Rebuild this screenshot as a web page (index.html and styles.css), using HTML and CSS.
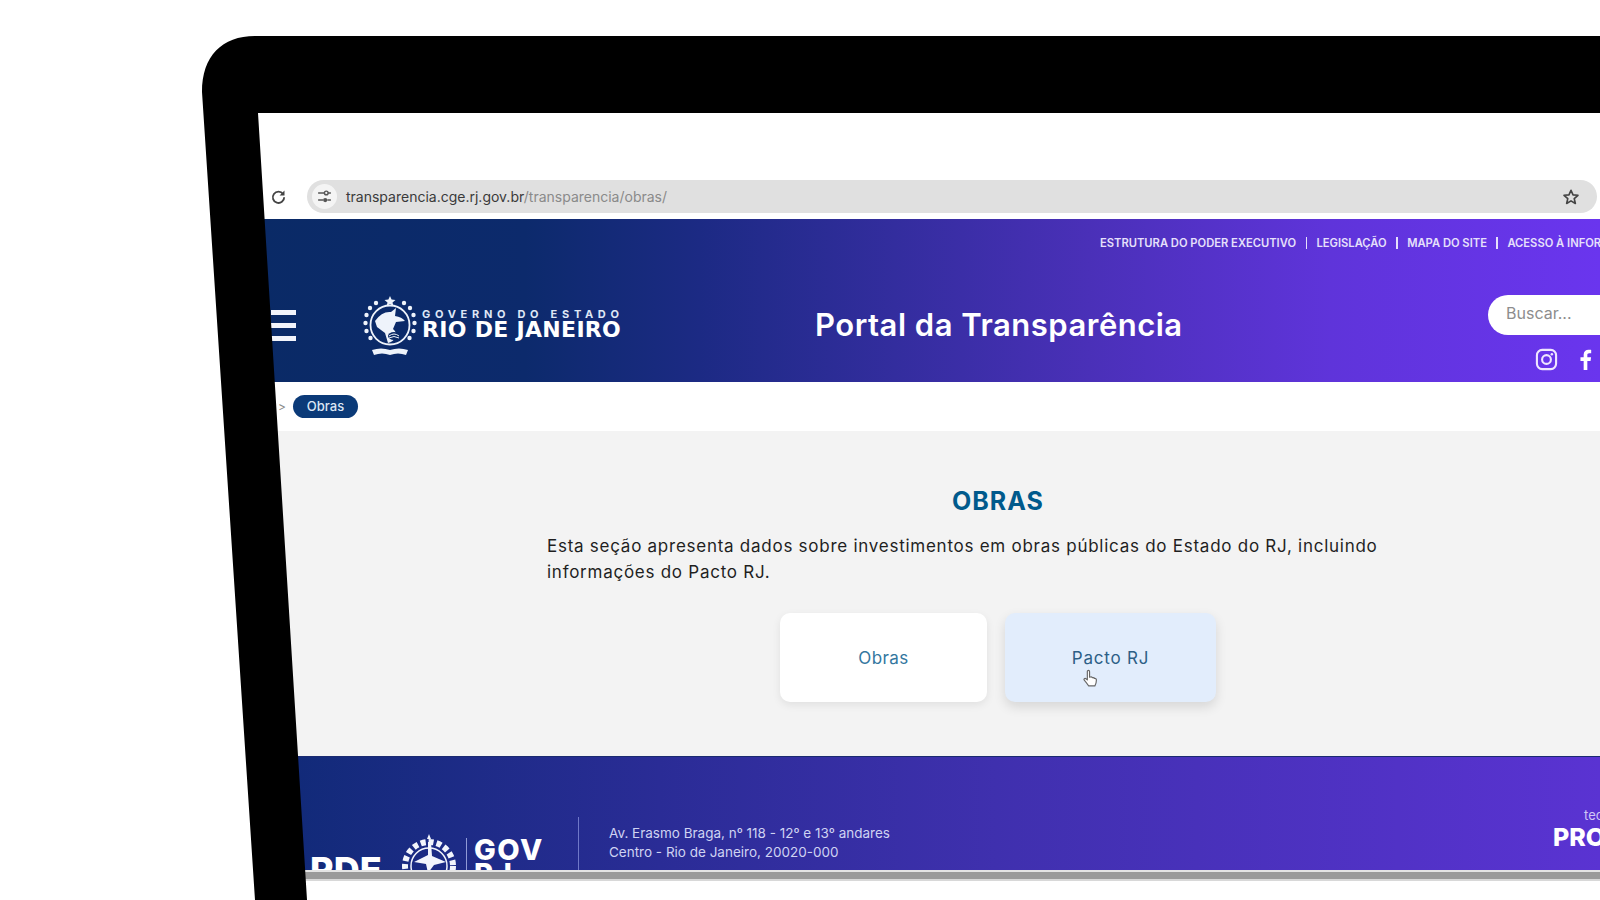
FILE: index.html
```html
<!DOCTYPE html>
<html lang="pt-BR">
<head>
<meta charset="utf-8">
<title>Portal da Transparência</title>
<link rel="stylesheet" href="styles.css">
</head>
<body>
<div class="stage">
  <div class="screen">
    <div class="chrome">
      <svg class="reload" viewBox="0 0 24 24" width="17" height="17"><path d="M18.5 8.5A8 8 0 1 0 20 13" fill="none" stroke="#444" stroke-width="2.6"/><path d="M20.5 3.5v7h-7z" fill="#444"/></svg>
      <div class="urlbar">
        <span class="tune"><svg viewBox="0 0 24 24" width="17" height="17"><path d="M3 7h9M3 17h7M17 7h4M16 17h5" stroke="#555" stroke-width="2" fill="none"/><circle cx="14.5" cy="7" r="2.6" fill="none" stroke="#555" stroke-width="2"/><circle cx="13" cy="17" r="3" fill="#555"/></svg></span>
        <span class="url"><b>transparencia.cge.rj.gov.br</b>/transparencia/obras/</span>
        <svg class="star" viewBox="0 0 24 24" width="18" height="18"><path d="M12 3l2.7 6.1 6.6.6-5 4.4 1.5 6.5L12 17.2l-5.8 3.4 1.5-6.5-5-4.4 6.6-.6z" fill="none" stroke="#444" stroke-width="2.2" stroke-linejoin="round"/></svg>
      </div>
    </div>

    <header class="site-header">
      <nav class="top-links">
        <a>ESTRUTURA DO PODER EXECUTIVO</a><i></i><a>LEGISLAÇÃO</a><i></i><a>MAPA DO SITE</a><i></i><a>ACESSO À INFORMAÇÃO</a>
      </nav>
      <div class="main-row">
        <div class="burger"><span></span><span></span><span></span></div>
        <div class="logo">
          <svg class="emblem" viewBox="0 0 54 60" width="54" height="60">
            <g fill="#eef3fb">
              <path d="M27 0l1.6 3.6 3.9.3-3 2.5 1 3.8L27 8.1l-3.5 2.1 1-3.8-3-2.5 3.9-.3z"/>
              <circle cx="13" cy="7" r="2.2"/><circle cx="41" cy="7" r="2.2"/>
              <circle cx="7" cy="12" r="2.2"/><circle cx="47" cy="12" r="2.2"/>
              <circle cx="3.5" cy="19" r="2.2"/><circle cx="50.500" cy="19" r="2.2"/>
              <circle cx="2.500" cy="27" r="2.2"/><circle cx="51.500" cy="27" r="2.2"/>
              <circle cx="3.500" cy="35" r="2.2"/><circle cx="50.500" cy="35" r="2.2"/>
              <circle cx="7.500" cy="42" r="2.2"/><circle cx="46.500" cy="42" r="2.2"/>
              <path d="M9 54q9-3 18 0q9-3 18 0l-2 5q-8-3-16 0q-8-3-16 0z"/>
              <path d="M12 25q7-10 16-9l5-4-1 8q7 1 10 5l-9 1-3 7q4 3 3 8-3 5-8 6l-3-10-8-6z"/>
            </g>
            <circle cx="27" cy="29" r="19.500" fill="none" stroke="#eef3fb" stroke-width="1.800"/>
            <ellipse cx="31" cy="40" rx="6" ry="4" fill="#0b2a66"/>
            <path d="M26 40q5-4 10 0M26 42q5-3 10 0" stroke="#eef3fb" fill="none" stroke-width="1"/>
          </svg>
          <div class="logo-text">
            <span class="gov-line">GOVERNO DO ESTADO</span>
            <span class="rio-line">RIO DE JANEIRO</span>
          </div>
        </div>
        <h1 class="site-title">Portal da Transparência</h1>
        <div class="tools">
          <div class="search">Buscar...</div>
          <div class="socials">
            <svg viewBox="0 0 24 24" width="23" height="23"><rect x="2" y="2" width="20" height="20" rx="5.500" fill="none" stroke="#efe6ff" stroke-width="2.2"/><circle cx="12" cy="12" r="4.600" fill="none" stroke="#efe6ff" stroke-width="2.2"/><circle cx="17.600" cy="6.400" r="1.300" fill="#efe6ff"/></svg>
            <svg viewBox="0 0 14 24" width="13" height="22"><path d="M9 23V13h3.500l.6-4H9V6.500C9 5.300 9.500 4.500 11 4.500h2.200V1C12.700.9 11.500.800 10.300.800 7.300.800 5 2.700 5 6v3H1.500v4H5v10z" fill="#fff"/></svg>
          </div>
        </div>
      </div>
    </header>

    <div class="crumbs">
      <span class="sep">&gt;</span>
      <span class="pill">Obras</span>
    </div>

    <main class="content">
      <h2 class="heading">OBRAS</h2>
      <p class="lead">Esta seção apresenta dados sobre investimentos em obras públicas do Estado do RJ, incluindo informações do Pacto RJ.</p>
      <div class="cards">
        <a class="card">Obras</a>
        <a class="card card-hover">Pacto RJ
          <svg class="hand" viewBox="0 0 18 22" width="16" height="20"><path d="M6 2.500c0-1.600 2.500-1.600 2.500 0V9l1-.3c1-.3 1.700 0 2 .8l.8-.1c1-.1 1.500.4 1.700 1 1.300-.2 2.200.5 2.200 1.800 0 3-.5 4.500-1.700 6.500H7.500c-1.500-2-3-4-5-6.300-1-1.300.7-2.800 2-1.700L6 12z" fill="#fff" stroke="#666" stroke-width="1.300" stroke-linejoin="round"/></svg>
        </a>
      </div>
    </main>

    <footer class="site-footer">
      <span class="foot-rde">RDE</span>
      <svg class="foot-emblem" viewBox="0 0 64 64" width="64" height="64">
        <g fill="#f2f5fc"><path d="M32 0l2 5h-4z"/><circle cx="32" cy="32" r="24" fill="none" stroke="#f2f5fc" stroke-width="6" stroke-dasharray="5 3"/><circle cx="32" cy="32" r="18" fill="none" stroke="#f2f5fc" stroke-width="1.500"/><path d="M31 8l3 0 1 14 14 6-12 3-6 8-2-9-12-2 14-7z"/></g>
      </svg>
      <div class="foot-gov"><span>GOV</span><span>RJ</span></div>
      <div class="foot-rule"></div>
      <address class="foot-address">Av. Erasmo Braga, nº 118 - 12º e 13º andares<br>Centro - Rio de Janeiro, 20020-000</address>
      <div class="foot-brand"><small>tecnologia</small><strong>PRODERJ</strong></div>
    </footer>
    <div class="screen-edge"></div>
  </div>

  <svg class="bezel" viewBox="0 0 1600 900" width="1600" height="900">
    <path d="M1600 36H255C222 36 202 56 202 92L255 900H307L258 113H1600Z" fill="#000"/>
  </svg>
</div>
</body>
</html>
```
FILE: styles.css
```css
* { box-sizing: border-box; }
html, body { margin: 0; padding: 0; background: #fff; }
body { font-family: Inter, "Liberation Sans", sans-serif; }
.stage { position: relative; width: 1600px; height: 900px; overflow: hidden; background: #fff; }
.screen { margin-left: 256px; padding-top: 113px; width: 1344px; }

.chrome { height: 106px; padding: 67px 0 6px 14px; display: flex; align-items: center; gap: 20px; background: #fff; }
.reload { flex: none; }
.urlbar { flex: none; width: 1290px; height: 33px; border-radius: 17px; background: #e0e0e0; display: flex; align-items: center; padding-left: 5px; }
.tune { width: 25px; height: 25px; border-radius: 50%; background: #f4f4f4; display: flex; align-items: center; justify-content: center; }
.url { margin-left: 9px; font-size: 14px; color: #8a8a8a; white-space: nowrap; }
.url b { font-weight: 400; color: #3a3a3a; }
.star { margin-left: auto; margin-right: 17px; }

.site-header { height: 163px; background: linear-gradient(90deg, #0a2a66 0%, #0c2a6c 20%, #1c2a84 33%, #4a30b8 62%, #5f34da 80%, #6a35ee 100%); color: #fff; overflow: hidden; }
.top-links { height: 50px; padding: 17px 0 0 844px; display: flex; align-items: flex-start; white-space: nowrap; font-size: 11.200px; font-weight: 600; line-height: 14px; color: #e6e0fb; }
.top-links i { flex: none; width: 1.500px; height: 12px; margin: 1px 9.500px 0; background: #e6e0fb; }
.main-row { height: 113px; display: flex; align-items: center; }
.burger { flex: none; margin-left: 15px; width: 25px; display: flex; flex-direction: column; gap: 8px; }
.burger span { height: 5px; background: #f2f4fb; }
.logo { flex: none; margin-left: 67px; width: 257px; display: flex; align-items: center; gap: 5px; }
.emblem { flex: none; }
.logo-text { flex: none; width: 198px; display: flex; flex-direction: column; margin-bottom: 4px; }
.gov-line { font-size: 11px; line-height: 12px; font-weight: 700; letter-spacing: 4.700px; color: #dfe7f6; white-space: nowrap; }
.rio-line { font-family: "DejaVu Sans", sans-serif; font-size: 22px; line-height: 20px; font-weight: 700; letter-spacing: 0.300px; white-space: nowrap; }
.site-title { flex: none; margin: 0 0 2px 195px; width: 367px; font-size: 31px; font-weight: 600; letter-spacing: 0.500px; white-space: nowrap; }
.tools { flex: none; margin-left: 306px; height: 113px; padding-top: 26px; }
.search { width: 200px; height: 40px; border-radius: 20px; background: #fff; color: #8d8d8d; font-size: 16px; line-height: 37px; padding-left: 18px; }
.socials { margin: 13px 0 0 47px; display: flex; align-items: center; gap: 21px; }
.socials svg { flex: none; }

.crumbs { height: 49px; background: #fff; display: flex; align-items: center; padding-left: 22px; }
.sep { color: #8a8a8a; font-size: 12px; width: 15px; }
.pill { width: 65px; height: 23px; border-radius: 12px; background: #0b3a78; color: #dce6f4; font-size: 13px; line-height: 23px; text-align: center; font-weight: 500; }

.content { height: 325px; background: #f3f3f3; padding-top: 56px; }
.heading { margin: 0; width: 1484px; text-align: center; font-size: 25px; line-height: 28px; font-weight: 700; color: #005a8c; letter-spacing: 1px; }
.lead { margin: 18px 0 0 291px; width: 860px; font-size: 17px; line-height: 26px; letter-spacing: 0.740px; color: #1f1f1f; }
.cards { margin: 28px 0 0 524px; display: flex; gap: 18px; }
.card { width: 207px; height: 89px; border-radius: 10px; background: #fff; box-shadow: 0 3px 8px rgba(0,0,0,.08); display: flex; align-items: center; justify-content: center; font-size: 17px; letter-spacing: 0.400px; color: #33779f; position: relative; }
.card-hover { width: 211px; background: #e2edfc; color: #2d5f86; box-shadow: 0 5px 12px rgba(0,0,0,.12); letter-spacing: 0.800px; }
.hand { position: absolute; left: 77px; top: 56px; }

.site-footer { height: 114px; background: linear-gradient(90deg, #0f2a76 0%, #2a2c96 30%, #3f30ae 55%, #5a33d2 100%); overflow: hidden; display: flex; align-items: flex-start; color: #fff; border-top: 1px solid #1a2a70; }
.foot-rde { flex: none; margin: 95px 0 0 54px; width: 70px; font-size: 36px; line-height: 36px; font-weight: 800; }
.foot-emblem { flex: none; margin: 77px 0 0 17px; }
.foot-gov { flex: none; margin: 81px 0 0 5px; padding-left: 7px; border-left: 1px solid #8f9ad6; display: flex; flex-direction: column; font-size: 29px; line-height: 24px; font-weight: 800; letter-spacing: 1.500px; width: 85px; height: 60px; }
.foot-rule { flex: none; margin: 60px 0 0 27px; width: 1px; height: 60px; background: #6f78c8; }
.foot-address { flex: none; margin: 67px 0 0 30px; width: 300px; font-style: normal; font-size: 13.500px; line-height: 19px; color: #cfd3f2; white-space: nowrap; }
.foot-brand { flex: none; margin: 49px 0 0 644px; display: flex; flex-direction: column; white-space: nowrap; }
.foot-brand small { padding-left: 31px; font-size: 13px; line-height: 18px; color: #cfc6f5; }
.foot-brand strong { font-size: 25px; line-height: 26px; font-weight: 800; }

.screen-edge { height: 11px; background: linear-gradient(180deg, #e4e4e4 0 2px, #9a9a9a 2px 9px, #d8d8d8 9px); }

.bezel { position: absolute; left: 0; top: 0; pointer-events: none; }
```
